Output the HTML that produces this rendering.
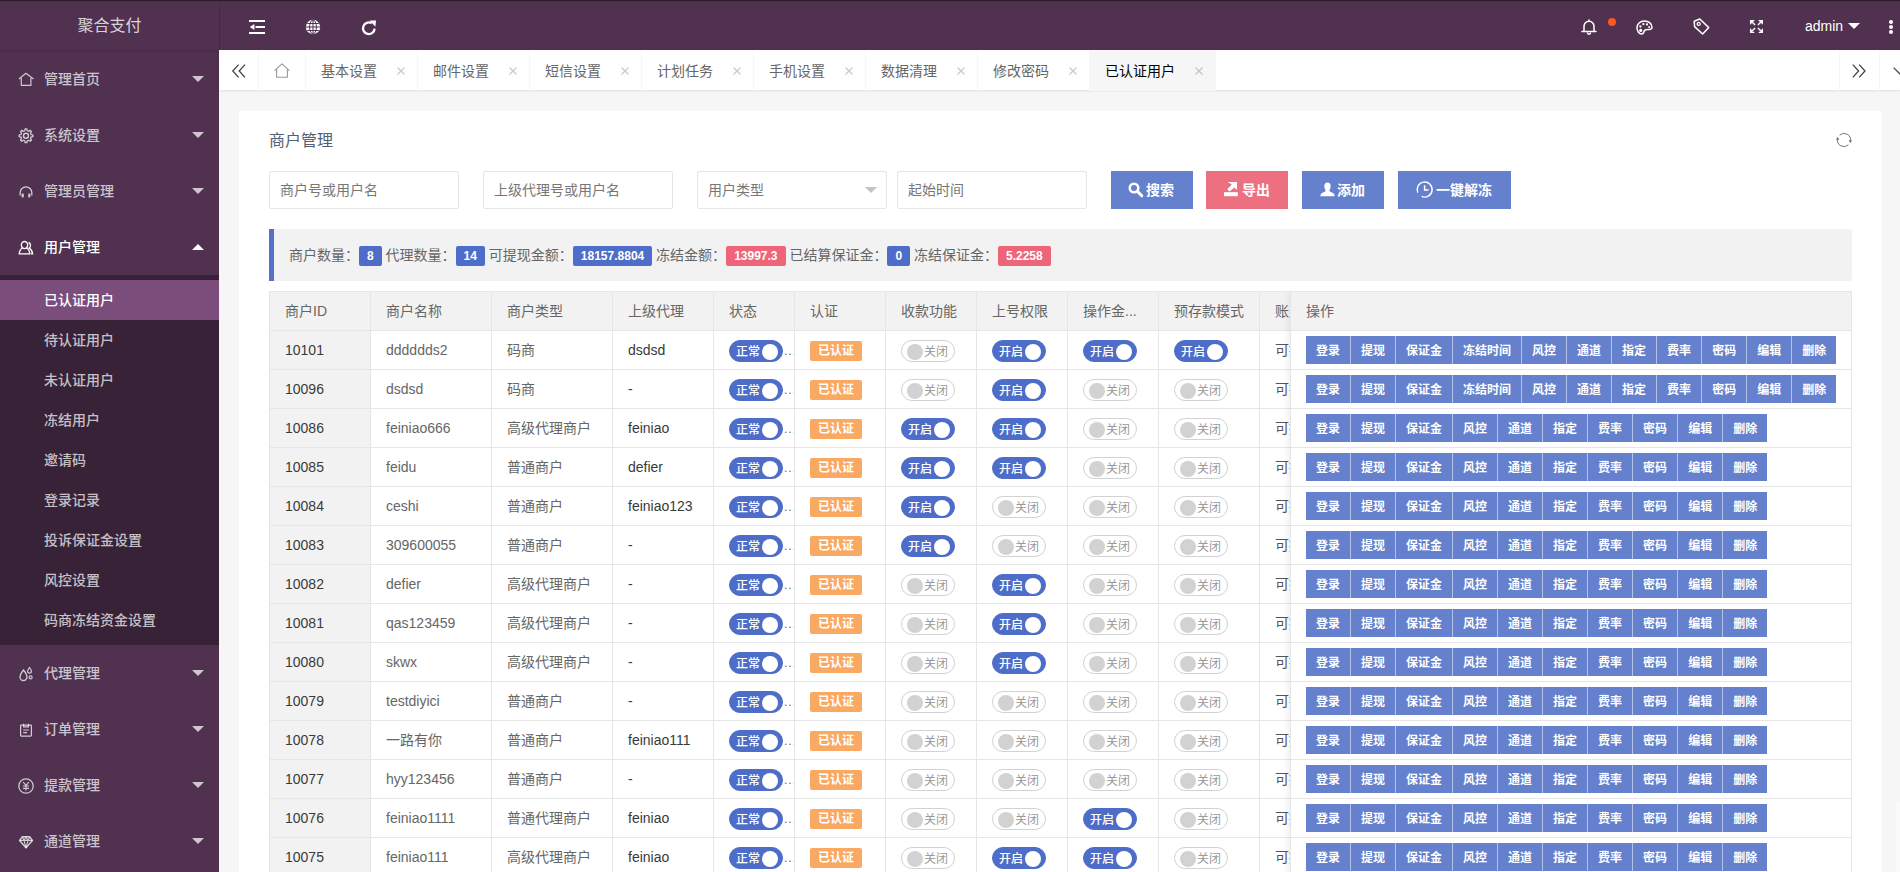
<!DOCTYPE html>
<html lang="zh-CN">
<head>
<meta charset="utf-8">
<title>聚合支付</title>
<style>
*{box-sizing:border-box;margin:0;padding:0}
html,body{width:1900px;height:872px;overflow:hidden}
body{position:relative;background:#f6f6f6;font:14px/1 "Liberation Sans","Noto Sans CJK SC",sans-serif;color:#666}
svg{display:block;position:absolute;overflow:visible}
.hd{position:absolute;left:0;top:0;width:1900px;height:50px;background:#50314F}
.topline{position:absolute;left:0;top:0;width:1900px;height:6px;background:linear-gradient(rgba(25,10,25,.62) 0,rgba(25,10,25,.5) 1px,rgba(70,60,70,.28) 1.6px,rgba(70,60,70,.16) 3px,rgba(70,60,70,0) 6px);z-index:9}
.vline{position:absolute;left:219px;top:0;width:1px;height:50px;background:rgba(0,0,0,.12)}
.side{position:absolute;left:0;top:0;width:219px;height:872px;background:#50314F;overflow:hidden}
.logo{position:absolute;left:0;top:0;width:219px;height:50px;line-height:52px;text-align:center;color:rgba(255,255,255,.8);font-size:16px;box-shadow:0 1px 2px 0 rgba(0,0,0,.15)}
.nav{position:absolute;left:0;top:51px;width:219px}
.ni{position:relative;height:56px;line-height:57px;padding-left:44px;color:rgba(255,255,255,.72);font-size:14px;font-weight:500}
.ni.on{color:#fff}
.ni .ar{position:absolute;right:15px;top:25px;width:0;height:0;border:6px solid transparent;border-top-color:rgba(255,255,255,.72)}
.ni.on .ar{top:19px;border-top-color:transparent;border-bottom-color:#fff}
.ni svg{left:18px;top:21px}
.child{background:rgba(0,0,0,.3);padding:5px 0}
.child div{height:40px;line-height:41px;padding-left:44px;color:rgba(255,255,255,.72);font-weight:500}
.child div.this{background:#7A4D7B;color:#fff}
.tabs{position:absolute;left:219px;top:50px;width:1681px;padding-left:1px;height:40px;background:#fff;box-shadow:0 1px 2px 0 rgba(0,0,0,.1)}
.tab{position:absolute;top:0;height:41px;line-height:42px;color:#666;border-right:1px solid #f6f6f6;white-space:nowrap}
.tab.on{background:#f6f6f6;color:#000}
.tab .x{position:absolute;top:0}
.card{position:absolute;left:239px;top:111px;width:1643px;height:800px;background:#fff;border-radius:2px}
.title{position:absolute;left:30px;top:18px;height:24px;line-height:24px;font-size:16px;color:#536074}
.inp{position:absolute;top:60px;height:38px;width:190px;border:1px solid #e6e6e6;border-radius:2px;background:#fff;line-height:36px;padding-left:10px;color:#777;font-size:14px}
.btn{position:absolute;top:60px;height:38px;line-height:38px;color:#fff;background:#6580CC;font-size:14px;border-radius:0;white-space:nowrap;font-weight:700}
.btn.red{background:#EC7080}
.quote{position:absolute;left:30px;top:118px;width:1583px;height:52px;background:#f2f2f2;border-left:5px solid #5870C8;border-radius:0 2px 2px 0;line-height:52px;padding-left:15px;color:#666;white-space:nowrap;font-size:14px}
.bd{display:inline-block;vertical-align:middle;height:20px;line-height:20px;padding:0 8px;border-radius:2px;background:#4E6DC9;color:#fff;font-size:12px;font-weight:bold;margin:0;position:relative;top:0}
.bd.r{background:#EE6478}
.tbl{position:absolute;left:30px;top:180px;width:1583px;height:700px;border:1px solid #e6e6e6;border-right:none;overflow:hidden;background:#fff}
.tr{position:absolute;left:0;width:1583px;height:39px;border-bottom:1px solid #e6e6e6}
.th{background:#f2f2f2}
.c{position:absolute;top:0;height:38px;line-height:38px;border-right:1px solid #e6e6e6;padding-left:15px;white-space:nowrap;overflow:hidden;color:#666}
.c.d{color:#3a3a3a}
.c.g{background:#f2f2f2}
.fix{position:absolute;left:1020px;top:0;width:562px;height:700px;background:#fff;box-shadow:-1px 0 8px rgba(0,0,0,.08);border-left:1px solid #e6e6e6;border-right:1px solid #e6e6e6}
.fr{position:absolute;left:0;width:560px;height:39px;border-bottom:1px solid #e6e6e6}
.sw{position:absolute;top:9px;left:15px;width:54px;height:22px;border:1px solid #d2d2d2;border-radius:11px;background:#fff;font-size:12px;line-height:20px;color:#999}
.sw i{position:absolute;left:5px;top:3px;width:16px;height:16px;border-radius:8px;background:#d2d2d2}
.sw em{position:absolute;left:22px;top:1px;font-style:normal}
.sw.on{background:#4E6DC9;border-color:#4E6DC9;color:#fff}
.sw.on i{left:32px;background:#fff}
.sw.on em{left:6px;font-weight:500}
.dots{position:absolute;left:70px;top:1px;font-size:12px;color:#666;letter-spacing:1px}
.ok{position:absolute;left:15px;top:10px;height:20px;line-height:21px;width:52px;text-align:center;border-radius:2px;background:#FAA962;color:#fff;font-size:12px;font-weight:bold}
.bg{position:absolute;left:15px;top:5px;height:28px;white-space:nowrap;font-size:0}
.bg{background:#b4c1e6}
.bg b{display:inline-block;height:28px;line-height:30px;padding:0 10px;background:#6580CC;color:#fff;font-size:12px;font-weight:700;margin-right:1px;vertical-align:top;overflow:hidden}
.bg b:last-child{margin-right:0}
</style>
</head>
<body>
<div class="hd"><div class="vline"></div>
<svg width="16" height="16" viewBox="0 0 16 16" style="left:249px;top:19px"><path d="M0 2 H16 M6.5 8 H16 M0 14 H16" stroke="#fff" stroke-width="1.9" fill="none"/><path d="M0.8 8 L5.4 4.9 V11.1 Z" fill="#fff"/></svg><svg width="16" height="16" viewBox="0 0 16 16" style="left:305px;top:19px"><circle cx="8" cy="8" r="7.2" fill="#fff"/><path d="M1 8 H15 M8 1 V15 M2.2 4.5 H13.8 M2.2 11.5 H13.8" stroke="#50314F" stroke-width="1" fill="none"/><ellipse cx="8" cy="8" rx="3.4" ry="7" fill="none" stroke="#50314F" stroke-width="1"/></svg><svg width="16" height="16" viewBox="0 0 16 16" style="left:361px;top:20px"><path d="M13.6 8.6 A5.8 5.8 0 1 1 10.6 3.2" fill="none" stroke="#fff" stroke-width="2.3"/><path d="M8.6 0.6 L15 0.4 L14.4 6.8 Z" fill="#fff"/></svg><svg width="16" height="16" viewBox="0 0 16 16" style="left:1581px;top:19px"><path d="M1 12.6 H15 M3 12.6 V7.2 a5 5 0 0 1 10 0 V12.6 M6.6 14.3 a1.5 1.3 0 0 0 2.8 0 M8 1 V2.2" fill="none" stroke="#fff" stroke-width="1.5" stroke-linecap="round"/></svg><div style="position:absolute;left:1608px;top:18px;width:8px;height:8px;border-radius:4px;background:#FF5722"></div><svg width="17" height="15" viewBox="0 0 17 15" style="left:1636px;top:20px"><path d="M8.5 1 C4 1 1 4 1 7.8 C1 11.5 3.2 14 5.6 14 C7.6 14 7.6 12.6 8 11.4 C8.5 10 10 9.6 12 9.6 C14.6 9.6 16 8.8 16 7.2 C16 3.8 13 1 8.5 1 Z" fill="none" stroke="#fff" stroke-width="1.5"/><circle cx="4.7" cy="10.4" r="1.6" fill="#fff"/><circle cx="4.4" cy="6.5" r="1.15" fill="#fff"/><circle cx="7.4" cy="4.1" r="1.15" fill="#fff"/><circle cx="11" cy="4.4" r="1.15" fill="#fff"/><circle cx="13.2" cy="6.9" r="1" fill="#fff"/></svg><svg width="17" height="17" viewBox="0 0 17 17" style="left:1693px;top:18px"><path d="M1.2 3.2 L6.8 1 L15.8 9.6 L9.6 16 L1.6 8.6 Z" fill="none" stroke="#fff" stroke-width="1.5" stroke-linejoin="round"/><circle cx="5.7" cy="5.9" r="1.5" fill="none" stroke="#fff" stroke-width="1.3"/></svg><svg width="13" height="13" viewBox="0 0 13 13" style="left:1750px;top:20px"><path d="M0.7 0.7 L5.1 5.1 M0.1 0.7 H4.3 M0.7 0.1 V4.3" stroke="#fff" stroke-width="1.35" fill="none"/><path d="M12.3 0.7 L7.9 5.1 M12.9 0.7 H8.7 M12.3 0.1 V4.3" stroke="#fff" stroke-width="1.35" fill="none"/><path d="M0.7 12.3 L5.1 7.9 M0.1 12.3 H4.3 M0.7 12.9 V8.7" stroke="#fff" stroke-width="1.35" fill="none"/><path d="M12.3 12.3 L7.9 7.9 M12.9 12.3 H8.7 M12.3 12.9 V8.7" stroke="#fff" stroke-width="1.35" fill="none"/></svg><div style="position:absolute;left:1805px;top:0;height:50px;line-height:52px;color:#fff;font-size:14px">admin</div><div style="position:absolute;left:1848px;top:23px;width:0;height:0;border:6px solid transparent;border-top-color:#fff"></div><div style="position:absolute;left:1889px;top:20px;width:4px;height:4px;border-radius:2px;background:#fff;box-shadow:0 5px 0 #fff,0 10px 0 #fff"></div></div>
<div class="side"><div class="logo">聚合支付</div><div class="nav">
<div class="ni"><svg width="16" height="16" viewBox="0 0 16 16" style=""><path d="M0.9 7 L7.9 1.3 L15.5 7 M3.3 6 V13.4 H12.9 V6" fill="none" stroke="rgba(255,255,255,.75)" stroke-width="1.15" stroke-linejoin="round"/></svg>管理首页<span class="ar"></span></div>
<div class="ni"><svg width="16" height="16" viewBox="0 0 16 16" style=""><path d="M13.06 6.59 L14.84 6.88 L14.84 8.72 L13.06 9.01 L12.43 10.52 L13.49 11.99 L12.19 13.29 L10.72 12.23 L9.21 12.86 L8.92 14.64 L7.08 14.64 L6.79 12.86 L5.28 12.23 L3.81 13.29 L2.51 11.99 L3.57 10.52 L2.94 9.01 L1.16 8.72 L1.16 6.88 L2.94 6.59 L3.57 5.08 L2.51 3.61 L3.81 2.31 L5.28 3.37 L6.79 2.74 L7.08 0.96 L8.92 0.96 L9.21 2.74 L10.72 3.37 L12.19 2.31 L13.49 3.61 L12.43 5.08 Z" fill="none" stroke="rgba(255,255,255,.75)" stroke-width="1.3" stroke-linejoin="round"/><circle cx="8" cy="7.8" r="2.5" fill="none" stroke="rgba(255,255,255,.75)" stroke-width="1.4"/></svg>系统设置<span class="ar"></span></div>
<div class="ni"><svg width="16" height="16" viewBox="0 0 16 16" style=""><path d="M2.2 11.6 V8.6 a5.8 5.8 0 0 1 11.6 0 V11.6" fill="none" stroke="rgba(255,255,255,.75)" stroke-width="1.3"/><rect x="3.6" y="9.4" width="2.2" height="4" rx="0.7" fill="rgba(255,255,255,.75)"/><rect x="10.2" y="9.4" width="2.2" height="4" rx="0.7" fill="rgba(255,255,255,.75)"/></svg>管理员管理<span class="ar"></span></div>
<div class="ni on"><svg width="16" height="16" viewBox="0 0 16 16" style=""><path d="M6.5 1.5 a3.2 3.6 0 1 0 0.01 0 M4.6 8 Q1.5 9.5 1.2 13.8 H11.8 Q11.5 9.5 8.4 8" fill="none" stroke="#fff" stroke-width="1.3"/><path d="M10.5 2.5 a2.6 3 0 0 1 0.6 5.6 Q14 9.5 14.6 13.8 H13" fill="none" stroke="#fff" stroke-width="1.3"/></svg>用户管理<span class="ar"></span></div>
<div class="child"><div class="this">已认证用户</div><div>待认证用户</div><div>未认证用户</div><div>冻结用户</div><div>邀请码</div><div>登录记录</div><div>投诉保证金设置</div><div>风控设置</div><div>码商冻结资金设置</div></div>
<div class="ni"><svg width="16" height="16" viewBox="0 0 16 16" style=""><path d="M5.5 4 Q2 8.5 2 11 a3.5 3.5 0 0 0 7 0 Q9 8.5 5.5 4z" fill="none" stroke="rgba(255,255,255,.75)" stroke-width="1.3"/><path d="M11.5 1.5 Q9.6 4 9.6 5.3 a1.9 1.9 0 0 0 3.8 0 Q13.4 4 11.5 1.5z" fill="none" stroke="rgba(255,255,255,.75)" stroke-width="1.2"/><circle cx="12.6" cy="11.4" r="1.5" fill="none" stroke="rgba(255,255,255,.75)" stroke-width="1.2"/></svg>代理管理<span class="ar"></span></div>
<div class="ni"><svg width="16" height="16" viewBox="0 0 16 16" style=""><rect x="2.6" y="3" width="10.8" height="11" rx="0.8" fill="none" stroke="rgba(255,255,255,.75)" stroke-width="1.25"/><path d="M5.6 1.8 V4.8 H10.4 V1.8 M5.2 8 H10.8 M5.2 10.6 H9" fill="none" stroke="rgba(255,255,255,.75)" stroke-width="1.15"/></svg>订单管理<span class="ar"></span></div>
<div class="ni"><svg width="16" height="16" viewBox="0 0 16 16" style=""><circle cx="8" cy="8" r="7.2" fill="none" stroke="rgba(255,255,255,.75)" stroke-width="1.25"/><path d="M5.2 4 L8 7.6 L10.8 4 M8 7.6 V12.4 M5 8 H11 M5 10.3 H11" fill="none" stroke="rgba(255,255,255,.75)" stroke-width="1.2"/></svg>提款管理<span class="ar"></span></div>
<div class="ni"><svg width="16" height="16" viewBox="0 0 16 16" style=""><path d="M4.4 2.8 H11.6 L14.4 6.4 L8 13.8 L1.6 6.4 Z" fill="none" stroke="rgba(255,255,255,.75)" stroke-width="1.5" stroke-linejoin="round"/><path d="M1.6 6.4 H14.4 M6 6.4 L8 13.8 L10 6.4 M4.4 2.8 L6 6.4 L8 2.8 L10 6.4 L11.6 2.8" fill="none" stroke="rgba(255,255,255,.75)" stroke-width="1.1" stroke-linejoin="round"/></svg>通道管理<span class="ar"></span></div>
</div></div>
<div class="tabs"><div style="position:absolute;left:1px;top:0;width:1680px;height:41px">
<svg width="14" height="14" viewBox="0 0 14 14" style="left:12px;top:14px"><path d="M6.6 0.6 L0.8 7 L6.6 13.4 M13 0.6 L7.2 7 L13 13.4" fill="none" stroke="#444" stroke-width="1.3"/></svg><div class="tab" style="left:0;width:39px"></div><div class="tab" style="left:39px;width:47px"><svg width="16" height="15" viewBox="0 0 16 15" style="left:15px;top:13px"><path d="M0.6 7.6 L8 0.8 L15.4 7.6 M2.6 6.4 V14.2 H13.4 V6.4" fill="none" stroke="#999" stroke-width="1.1" stroke-linejoin="round"/></svg></div><div class="tab" style="left:86px;width:112px;padding-left:15px">基本设置<svg width="8" height="8" viewBox="0 0 8 8" style="left:91px;top:17px"><path d="M0.5 0.5 L7.5 7.5 M7.5 0.5 L0.5 7.5" stroke="#c8c8c8" stroke-width="1.1" fill="none"/></svg></div><div class="tab" style="left:198px;width:112px;padding-left:15px">邮件设置<svg width="8" height="8" viewBox="0 0 8 8" style="left:91px;top:17px"><path d="M0.5 0.5 L7.5 7.5 M7.5 0.5 L0.5 7.5" stroke="#c8c8c8" stroke-width="1.1" fill="none"/></svg></div><div class="tab" style="left:310px;width:112px;padding-left:15px">短信设置<svg width="8" height="8" viewBox="0 0 8 8" style="left:91px;top:17px"><path d="M0.5 0.5 L7.5 7.5 M7.5 0.5 L0.5 7.5" stroke="#c8c8c8" stroke-width="1.1" fill="none"/></svg></div><div class="tab" style="left:422px;width:112px;padding-left:15px">计划任务<svg width="8" height="8" viewBox="0 0 8 8" style="left:91px;top:17px"><path d="M0.5 0.5 L7.5 7.5 M7.5 0.5 L0.5 7.5" stroke="#c8c8c8" stroke-width="1.1" fill="none"/></svg></div><div class="tab" style="left:534px;width:112px;padding-left:15px">手机设置<svg width="8" height="8" viewBox="0 0 8 8" style="left:91px;top:17px"><path d="M0.5 0.5 L7.5 7.5 M7.5 0.5 L0.5 7.5" stroke="#c8c8c8" stroke-width="1.1" fill="none"/></svg></div><div class="tab" style="left:646px;width:112px;padding-left:15px">数据清理<svg width="8" height="8" viewBox="0 0 8 8" style="left:91px;top:17px"><path d="M0.5 0.5 L7.5 7.5 M7.5 0.5 L0.5 7.5" stroke="#c8c8c8" stroke-width="1.1" fill="none"/></svg></div><div class="tab" style="left:758px;width:112px;padding-left:15px">修改密码<svg width="8" height="8" viewBox="0 0 8 8" style="left:91px;top:17px"><path d="M0.5 0.5 L7.5 7.5 M7.5 0.5 L0.5 7.5" stroke="#c8c8c8" stroke-width="1.1" fill="none"/></svg></div><div class="tab on" style="left:870px;width:126px;padding-left:15px">已认证用户<svg width="8" height="8" viewBox="0 0 8 8" style="left:105px;top:17px"><path d="M0.5 0.5 L7.5 7.5 M7.5 0.5 L0.5 7.5" stroke="#c2c2c2" stroke-width="1.1" fill="none"/></svg></div><div class="tab" style="left:1619px;width:1px;border-right:none;border-left:1px solid #f6f6f6"></div><svg width="14" height="14" viewBox="0 0 14 14" style="left:1632px;top:14px"><path d="M0.8 0.6 L6.6 7 L0.8 13.4 M7.2 0.6 L13 7 L7.2 13.4" fill="none" stroke="#444" stroke-width="1.3"/></svg><div class="tab" style="left:1659px;width:1px;border-right:none;border-left:1px solid #f6f6f6"></div><svg width="14" height="8" viewBox="0 0 14 8" style="left:1673px;top:17px"><path d="M0.6 0.6 L7 7 L13.4 0.6" fill="none" stroke="#444" stroke-width="1.3"/></svg></div></div>
<div class="card">
<div class="title">商户管理</div>
<svg width="16" height="16" viewBox="0 0 16 16" style="left:1597px;top:21px"><path d="M3.58 3.10 A6.6 6.6 0 0 1 14.54 8.92 M12.42 12.90 A6.6 6.6 0 0 1 1.46 7.08" fill="none" stroke="#777" stroke-width="1"/><path d="M12.7 8.2 L16.1 8.2 L14.3 11.2 Z M-0.1 7.8 L3.3 7.8 L1.7 4.8 Z" fill="#777"/></svg><div class="inp" style="left:30px">商户号或用户名</div><div class="inp" style="left:244px">上级代理号或用户名</div><div class="inp" style="left:458px">用户类型<span style="position:absolute;right:9px;top:15px;width:0;height:0;border:6px solid transparent;border-top-color:#c2c2c2"></span></div><div class="inp" style="left:658px">起始时间</div><div class="btn" style="left:872px;width:82px;padding-left:35px"><svg width="16" height="16" viewBox="0 0 16 16" style="left:17px;top:11px"><circle cx="6" cy="6" r="4.3" fill="none" stroke="#fff" stroke-width="2.5"/><path d="M9.6 9.6 L13.8 13.8" stroke="#fff" stroke-width="3" stroke-linecap="round"/></svg>搜索</div><div class="btn red" style="left:967px;width:82px;padding-left:36px"><svg width="14" height="15" viewBox="0 0 14 15" style="left:18px;top:11px"><rect x="0" y="10.2" width="13.8" height="4" fill="#fff"/><path d="M3.8 0 H13 V8 L10.4 5.4 L5.6 9.6 L3.2 7.2 L7.8 2.8 Z" fill="#fff"/></svg>导出</div><div class="btn" style="left:1063px;width:82px;padding-left:35px"><svg width="15" height="15" viewBox="0 0 16 16" style="left:18px;top:11px"><path d="M8 0.6 C5.6 0.6 4.4 2.4 4.6 4.8 C4.8 7.2 6 8.4 6 9.2 C6 10.4 3 10.8 1.4 12.2 C0.6 13 0.4 14.4 0.4 15.2 H15.6 C15.6 14.4 15.4 13 14.6 12.2 C13 10.8 10 10.4 10 9.2 C10 8.4 11.2 7.2 11.4 4.8 C11.6 2.4 10.4 0.6 8 0.6 Z" fill="#fff"/></svg>添加</div><div class="btn" style="left:1159px;width:113px;padding-left:38px"><svg width="17" height="17" viewBox="0 0 17 17" style="left:18px;top:10px"><path d="M5.6 15.4 A7.5 7.5 0 1 0 1.8 11.6" fill="none" stroke="#fff" stroke-width="1.4"/><path d="M8.6 4.2 V9 H12.6" fill="none" stroke="#fff" stroke-width="1.5"/></svg>一键解冻</div>
<div class="quote">商户数量：<span class="bd">8</span> 代理数量：<span class="bd">14</span> 可提现金额：<span class="bd">18157.8804</span> 冻结金额：<span class="bd r">13997.3</span> 已结算保证金：<span class="bd">0</span> 冻结保证金：<span class="bd r">5.2258</span></div>
<div class="tbl">
<div class="tr th" style="top:0"><div class="c" style="left:0px;width:101px">商户ID</div><div class="c" style="left:101px;width:121px">商户名称</div><div class="c" style="left:222px;width:121px">商户类型</div><div class="c" style="left:343px;width:101px">上级代理</div><div class="c" style="left:444px;width:81px">状态</div><div class="c" style="left:525px;width:91px">认证</div><div class="c" style="left:616px;width:91px">收款功能</div><div class="c" style="left:707px;width:91px">上号权限</div><div class="c" style="left:798px;width:91px">操作金...</div><div class="c" style="left:889px;width:101px">预存款模式</div><div class="c" style="left:990px;width:120px">账户余额</div></div>
<div class="tr" style="top:39px"><div class="c d g" style="left:0px;width:101px">10101</div><div class="c" style="left:101px;width:121px">dddddds2</div><div class="c" style="left:222px;width:121px">码商</div><div class="c d" style="left:343px;width:101px">dsdsd</div><div class="c" style="left:444px;width:81px"><span class="sw on"><em>正常</em><i></i></span><span class="dots">...</span></div><div class="c" style="left:525px;width:91px"><span class="ok">已认证</span></div><div class="c" style="left:616px;width:91px"><span class="sw"><em>关闭</em><i></i></span></div><div class="c" style="left:707px;width:91px"><span class="sw on"><em>开启</em><i></i></span></div><div class="c" style="left:798px;width:91px"><span class="sw on"><em>开启</em><i></i></span></div><div class="c" style="left:889px;width:101px"><span class="sw on"><em>开启</em><i></i></span></div><div class="c" style="left:990px;width:120px;color:#555">可提现：0.00</div></div>
<div class="tr" style="top:78px"><div class="c d g" style="left:0px;width:101px">10096</div><div class="c" style="left:101px;width:121px">dsdsd</div><div class="c" style="left:222px;width:121px">码商</div><div class="c d" style="left:343px;width:101px">-</div><div class="c" style="left:444px;width:81px"><span class="sw on"><em>正常</em><i></i></span><span class="dots">...</span></div><div class="c" style="left:525px;width:91px"><span class="ok">已认证</span></div><div class="c" style="left:616px;width:91px"><span class="sw"><em>关闭</em><i></i></span></div><div class="c" style="left:707px;width:91px"><span class="sw on"><em>开启</em><i></i></span></div><div class="c" style="left:798px;width:91px"><span class="sw"><em>关闭</em><i></i></span></div><div class="c" style="left:889px;width:101px"><span class="sw"><em>关闭</em><i></i></span></div><div class="c" style="left:990px;width:120px;color:#555">可提现：0.00</div></div>
<div class="tr" style="top:117px"><div class="c d g" style="left:0px;width:101px">10086</div><div class="c" style="left:101px;width:121px">feiniao666</div><div class="c" style="left:222px;width:121px">高级代理商户</div><div class="c d" style="left:343px;width:101px">feiniao</div><div class="c" style="left:444px;width:81px"><span class="sw on"><em>正常</em><i></i></span><span class="dots">...</span></div><div class="c" style="left:525px;width:91px"><span class="ok">已认证</span></div><div class="c" style="left:616px;width:91px"><span class="sw on"><em>开启</em><i></i></span></div><div class="c" style="left:707px;width:91px"><span class="sw on"><em>开启</em><i></i></span></div><div class="c" style="left:798px;width:91px"><span class="sw"><em>关闭</em><i></i></span></div><div class="c" style="left:889px;width:101px"><span class="sw"><em>关闭</em><i></i></span></div><div class="c" style="left:990px;width:120px;color:#555">可提现：0.00</div></div>
<div class="tr" style="top:156px"><div class="c d g" style="left:0px;width:101px">10085</div><div class="c" style="left:101px;width:121px">feidu</div><div class="c" style="left:222px;width:121px">普通商户</div><div class="c d" style="left:343px;width:101px">defier</div><div class="c" style="left:444px;width:81px"><span class="sw on"><em>正常</em><i></i></span><span class="dots">...</span></div><div class="c" style="left:525px;width:91px"><span class="ok">已认证</span></div><div class="c" style="left:616px;width:91px"><span class="sw on"><em>开启</em><i></i></span></div><div class="c" style="left:707px;width:91px"><span class="sw on"><em>开启</em><i></i></span></div><div class="c" style="left:798px;width:91px"><span class="sw"><em>关闭</em><i></i></span></div><div class="c" style="left:889px;width:101px"><span class="sw"><em>关闭</em><i></i></span></div><div class="c" style="left:990px;width:120px;color:#555">可提现：0.00</div></div>
<div class="tr" style="top:195px"><div class="c d g" style="left:0px;width:101px">10084</div><div class="c" style="left:101px;width:121px">ceshi</div><div class="c" style="left:222px;width:121px">普通商户</div><div class="c d" style="left:343px;width:101px">feiniao123</div><div class="c" style="left:444px;width:81px"><span class="sw on"><em>正常</em><i></i></span><span class="dots">...</span></div><div class="c" style="left:525px;width:91px"><span class="ok">已认证</span></div><div class="c" style="left:616px;width:91px"><span class="sw on"><em>开启</em><i></i></span></div><div class="c" style="left:707px;width:91px"><span class="sw"><em>关闭</em><i></i></span></div><div class="c" style="left:798px;width:91px"><span class="sw"><em>关闭</em><i></i></span></div><div class="c" style="left:889px;width:101px"><span class="sw"><em>关闭</em><i></i></span></div><div class="c" style="left:990px;width:120px;color:#555">可提现：0.00</div></div>
<div class="tr" style="top:234px"><div class="c d g" style="left:0px;width:101px">10083</div><div class="c" style="left:101px;width:121px">309600055</div><div class="c" style="left:222px;width:121px">普通商户</div><div class="c d" style="left:343px;width:101px">-</div><div class="c" style="left:444px;width:81px"><span class="sw on"><em>正常</em><i></i></span><span class="dots">...</span></div><div class="c" style="left:525px;width:91px"><span class="ok">已认证</span></div><div class="c" style="left:616px;width:91px"><span class="sw on"><em>开启</em><i></i></span></div><div class="c" style="left:707px;width:91px"><span class="sw"><em>关闭</em><i></i></span></div><div class="c" style="left:798px;width:91px"><span class="sw"><em>关闭</em><i></i></span></div><div class="c" style="left:889px;width:101px"><span class="sw"><em>关闭</em><i></i></span></div><div class="c" style="left:990px;width:120px;color:#555">可提现：0.00</div></div>
<div class="tr" style="top:273px"><div class="c d g" style="left:0px;width:101px">10082</div><div class="c" style="left:101px;width:121px">defier</div><div class="c" style="left:222px;width:121px">高级代理商户</div><div class="c d" style="left:343px;width:101px">-</div><div class="c" style="left:444px;width:81px"><span class="sw on"><em>正常</em><i></i></span><span class="dots">...</span></div><div class="c" style="left:525px;width:91px"><span class="ok">已认证</span></div><div class="c" style="left:616px;width:91px"><span class="sw"><em>关闭</em><i></i></span></div><div class="c" style="left:707px;width:91px"><span class="sw on"><em>开启</em><i></i></span></div><div class="c" style="left:798px;width:91px"><span class="sw"><em>关闭</em><i></i></span></div><div class="c" style="left:889px;width:101px"><span class="sw"><em>关闭</em><i></i></span></div><div class="c" style="left:990px;width:120px;color:#555">可提现：0.00</div></div>
<div class="tr" style="top:312px"><div class="c d g" style="left:0px;width:101px">10081</div><div class="c" style="left:101px;width:121px">qas123459</div><div class="c" style="left:222px;width:121px">高级代理商户</div><div class="c d" style="left:343px;width:101px">-</div><div class="c" style="left:444px;width:81px"><span class="sw on"><em>正常</em><i></i></span><span class="dots">...</span></div><div class="c" style="left:525px;width:91px"><span class="ok">已认证</span></div><div class="c" style="left:616px;width:91px"><span class="sw"><em>关闭</em><i></i></span></div><div class="c" style="left:707px;width:91px"><span class="sw on"><em>开启</em><i></i></span></div><div class="c" style="left:798px;width:91px"><span class="sw"><em>关闭</em><i></i></span></div><div class="c" style="left:889px;width:101px"><span class="sw"><em>关闭</em><i></i></span></div><div class="c" style="left:990px;width:120px;color:#555">可提现：0.00</div></div>
<div class="tr" style="top:351px"><div class="c d g" style="left:0px;width:101px">10080</div><div class="c" style="left:101px;width:121px">skwx</div><div class="c" style="left:222px;width:121px">高级代理商户</div><div class="c d" style="left:343px;width:101px">-</div><div class="c" style="left:444px;width:81px"><span class="sw on"><em>正常</em><i></i></span><span class="dots">...</span></div><div class="c" style="left:525px;width:91px"><span class="ok">已认证</span></div><div class="c" style="left:616px;width:91px"><span class="sw"><em>关闭</em><i></i></span></div><div class="c" style="left:707px;width:91px"><span class="sw on"><em>开启</em><i></i></span></div><div class="c" style="left:798px;width:91px"><span class="sw"><em>关闭</em><i></i></span></div><div class="c" style="left:889px;width:101px"><span class="sw"><em>关闭</em><i></i></span></div><div class="c" style="left:990px;width:120px;color:#555">可提现：0.00</div></div>
<div class="tr" style="top:390px"><div class="c d g" style="left:0px;width:101px">10079</div><div class="c" style="left:101px;width:121px">testdiyici</div><div class="c" style="left:222px;width:121px">普通商户</div><div class="c d" style="left:343px;width:101px">-</div><div class="c" style="left:444px;width:81px"><span class="sw on"><em>正常</em><i></i></span><span class="dots">...</span></div><div class="c" style="left:525px;width:91px"><span class="ok">已认证</span></div><div class="c" style="left:616px;width:91px"><span class="sw"><em>关闭</em><i></i></span></div><div class="c" style="left:707px;width:91px"><span class="sw"><em>关闭</em><i></i></span></div><div class="c" style="left:798px;width:91px"><span class="sw"><em>关闭</em><i></i></span></div><div class="c" style="left:889px;width:101px"><span class="sw"><em>关闭</em><i></i></span></div><div class="c" style="left:990px;width:120px;color:#555">可提现：0.00</div></div>
<div class="tr" style="top:429px"><div class="c d g" style="left:0px;width:101px">10078</div><div class="c" style="left:101px;width:121px">一路有你</div><div class="c" style="left:222px;width:121px">普通商户</div><div class="c d" style="left:343px;width:101px">feiniao111</div><div class="c" style="left:444px;width:81px"><span class="sw on"><em>正常</em><i></i></span><span class="dots">...</span></div><div class="c" style="left:525px;width:91px"><span class="ok">已认证</span></div><div class="c" style="left:616px;width:91px"><span class="sw"><em>关闭</em><i></i></span></div><div class="c" style="left:707px;width:91px"><span class="sw"><em>关闭</em><i></i></span></div><div class="c" style="left:798px;width:91px"><span class="sw"><em>关闭</em><i></i></span></div><div class="c" style="left:889px;width:101px"><span class="sw"><em>关闭</em><i></i></span></div><div class="c" style="left:990px;width:120px;color:#555">可提现：0.00</div></div>
<div class="tr" style="top:468px"><div class="c d g" style="left:0px;width:101px">10077</div><div class="c" style="left:101px;width:121px">hyy123456</div><div class="c" style="left:222px;width:121px">普通商户</div><div class="c d" style="left:343px;width:101px">-</div><div class="c" style="left:444px;width:81px"><span class="sw on"><em>正常</em><i></i></span><span class="dots">...</span></div><div class="c" style="left:525px;width:91px"><span class="ok">已认证</span></div><div class="c" style="left:616px;width:91px"><span class="sw"><em>关闭</em><i></i></span></div><div class="c" style="left:707px;width:91px"><span class="sw"><em>关闭</em><i></i></span></div><div class="c" style="left:798px;width:91px"><span class="sw"><em>关闭</em><i></i></span></div><div class="c" style="left:889px;width:101px"><span class="sw"><em>关闭</em><i></i></span></div><div class="c" style="left:990px;width:120px;color:#555">可提现：0.00</div></div>
<div class="tr" style="top:507px"><div class="c d g" style="left:0px;width:101px">10076</div><div class="c" style="left:101px;width:121px">feiniao1111</div><div class="c" style="left:222px;width:121px">普通代理商户</div><div class="c d" style="left:343px;width:101px">feiniao</div><div class="c" style="left:444px;width:81px"><span class="sw on"><em>正常</em><i></i></span><span class="dots">...</span></div><div class="c" style="left:525px;width:91px"><span class="ok">已认证</span></div><div class="c" style="left:616px;width:91px"><span class="sw"><em>关闭</em><i></i></span></div><div class="c" style="left:707px;width:91px"><span class="sw"><em>关闭</em><i></i></span></div><div class="c" style="left:798px;width:91px"><span class="sw on"><em>开启</em><i></i></span></div><div class="c" style="left:889px;width:101px"><span class="sw"><em>关闭</em><i></i></span></div><div class="c" style="left:990px;width:120px;color:#555">可提现：0.00</div></div>
<div class="tr" style="top:546px"><div class="c d g" style="left:0px;width:101px">10075</div><div class="c" style="left:101px;width:121px">feiniao111</div><div class="c" style="left:222px;width:121px">高级代理商户</div><div class="c d" style="left:343px;width:101px">feiniao</div><div class="c" style="left:444px;width:81px"><span class="sw on"><em>正常</em><i></i></span><span class="dots">...</span></div><div class="c" style="left:525px;width:91px"><span class="ok">已认证</span></div><div class="c" style="left:616px;width:91px"><span class="sw"><em>关闭</em><i></i></span></div><div class="c" style="left:707px;width:91px"><span class="sw on"><em>开启</em><i></i></span></div><div class="c" style="left:798px;width:91px"><span class="sw on"><em>开启</em><i></i></span></div><div class="c" style="left:889px;width:101px"><span class="sw"><em>关闭</em><i></i></span></div><div class="c" style="left:990px;width:120px;color:#555">可提现：0.00</div></div>
<div class="fix"><div class="fr th" style="top:0"><div class="c" style="left:0;width:560px;border-right:none;color:#666">操作</div></div>
<div class="fr" style="top:39px"><div class="bg"><b>登录</b><b>提现</b><b>保证金</b><b>冻结时间</b><b>风控</b><b>通道</b><b>指定</b><b>费率</b><b>密码</b><b>编辑</b><b>删除</b></div></div>
<div class="fr" style="top:78px"><div class="bg"><b>登录</b><b>提现</b><b>保证金</b><b>冻结时间</b><b>风控</b><b>通道</b><b>指定</b><b>费率</b><b>密码</b><b>编辑</b><b>删除</b></div></div>
<div class="fr" style="top:117px"><div class="bg"><b>登录</b><b>提现</b><b>保证金</b><b>风控</b><b>通道</b><b>指定</b><b>费率</b><b>密码</b><b>编辑</b><b>删除</b></div></div>
<div class="fr" style="top:156px"><div class="bg"><b>登录</b><b>提现</b><b>保证金</b><b>风控</b><b>通道</b><b>指定</b><b>费率</b><b>密码</b><b>编辑</b><b>删除</b></div></div>
<div class="fr" style="top:195px"><div class="bg"><b>登录</b><b>提现</b><b>保证金</b><b>风控</b><b>通道</b><b>指定</b><b>费率</b><b>密码</b><b>编辑</b><b>删除</b></div></div>
<div class="fr" style="top:234px"><div class="bg"><b>登录</b><b>提现</b><b>保证金</b><b>风控</b><b>通道</b><b>指定</b><b>费率</b><b>密码</b><b>编辑</b><b>删除</b></div></div>
<div class="fr" style="top:273px"><div class="bg"><b>登录</b><b>提现</b><b>保证金</b><b>风控</b><b>通道</b><b>指定</b><b>费率</b><b>密码</b><b>编辑</b><b>删除</b></div></div>
<div class="fr" style="top:312px"><div class="bg"><b>登录</b><b>提现</b><b>保证金</b><b>风控</b><b>通道</b><b>指定</b><b>费率</b><b>密码</b><b>编辑</b><b>删除</b></div></div>
<div class="fr" style="top:351px"><div class="bg"><b>登录</b><b>提现</b><b>保证金</b><b>风控</b><b>通道</b><b>指定</b><b>费率</b><b>密码</b><b>编辑</b><b>删除</b></div></div>
<div class="fr" style="top:390px"><div class="bg"><b>登录</b><b>提现</b><b>保证金</b><b>风控</b><b>通道</b><b>指定</b><b>费率</b><b>密码</b><b>编辑</b><b>删除</b></div></div>
<div class="fr" style="top:429px"><div class="bg"><b>登录</b><b>提现</b><b>保证金</b><b>风控</b><b>通道</b><b>指定</b><b>费率</b><b>密码</b><b>编辑</b><b>删除</b></div></div>
<div class="fr" style="top:468px"><div class="bg"><b>登录</b><b>提现</b><b>保证金</b><b>风控</b><b>通道</b><b>指定</b><b>费率</b><b>密码</b><b>编辑</b><b>删除</b></div></div>
<div class="fr" style="top:507px"><div class="bg"><b>登录</b><b>提现</b><b>保证金</b><b>风控</b><b>通道</b><b>指定</b><b>费率</b><b>密码</b><b>编辑</b><b>删除</b></div></div>
<div class="fr" style="top:546px"><div class="bg"><b>登录</b><b>提现</b><b>保证金</b><b>风控</b><b>通道</b><b>指定</b><b>费率</b><b>密码</b><b>编辑</b><b>删除</b></div></div>
</div>
</div>
</div>
<div style="position:absolute;left:1896px;top:801px;width:4px;height:71px;background:#fafafa"></div>
<div class="topline"></div>
</body>
</html>
